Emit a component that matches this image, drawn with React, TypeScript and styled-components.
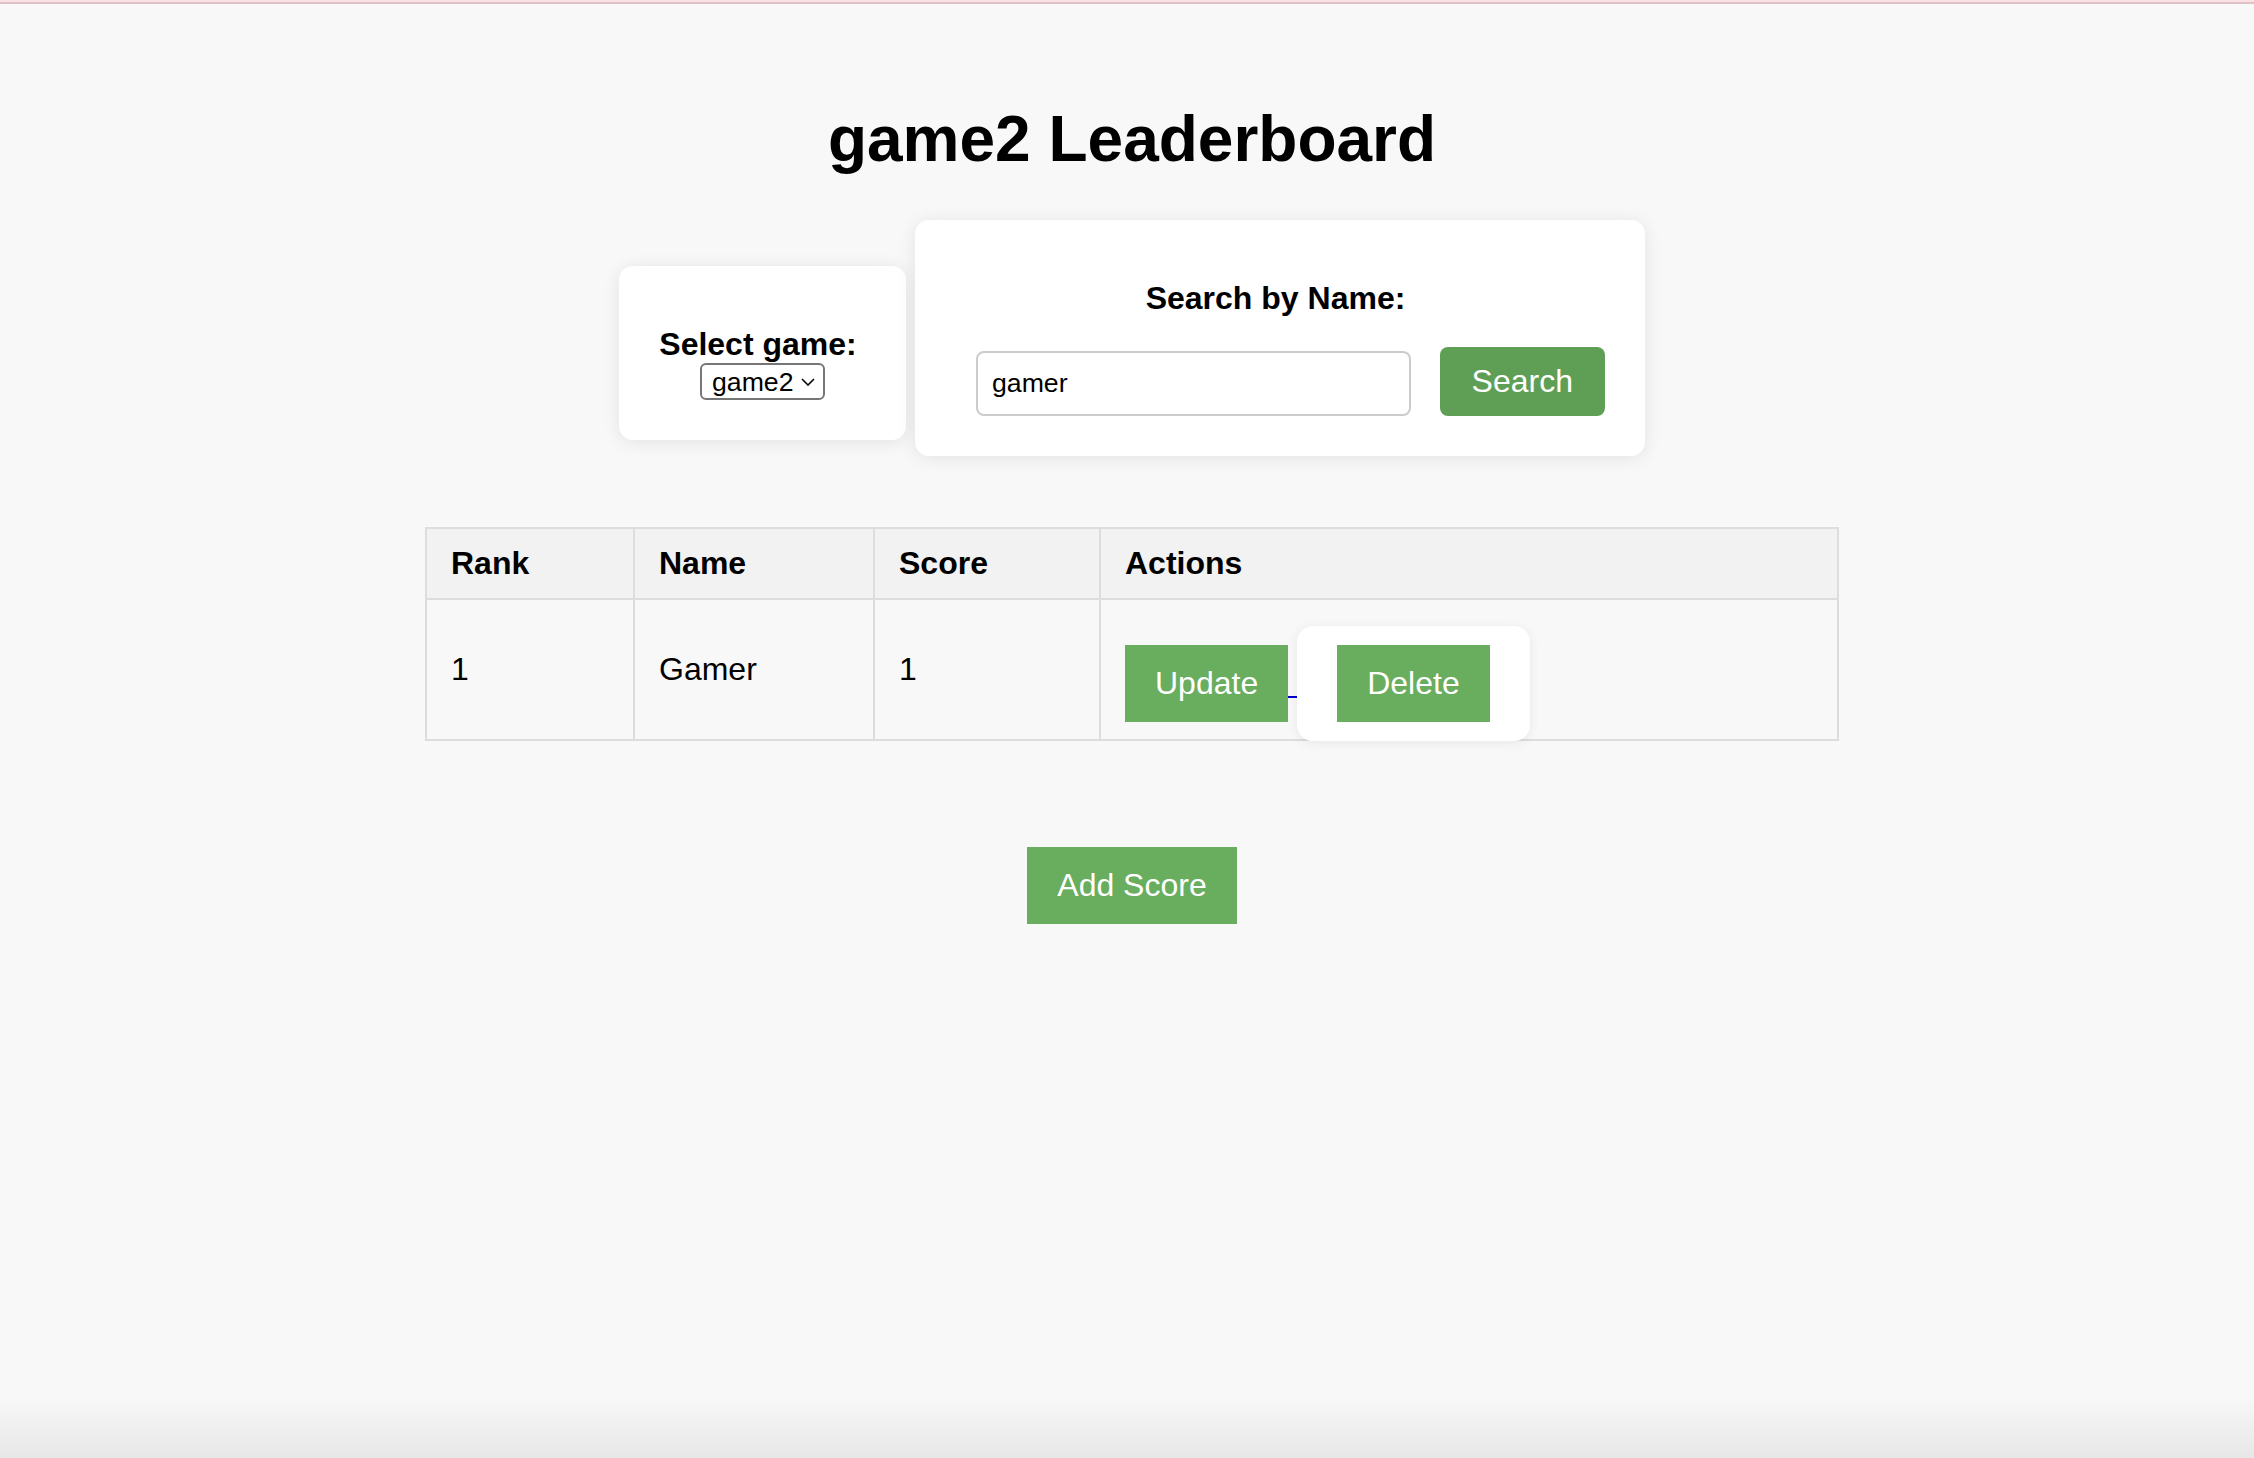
import React from "react";
import styled, { createGlobalStyle } from "styled-components";

const GlobalStyle = createGlobalStyle`
  html, body { margin: 0; padding: 0; }
  body {
    font-family: "Liberation Sans", Arial, Helvetica, sans-serif;
    color: #000;
    background: #f8f8f8;
  }
`;

const Screen = styled.div`
  min-height: 100vh;
  box-sizing: border-box;
  background: linear-gradient(to bottom, #f8f8f8 0, #f8f8f8 calc(100% - 62px), #e7e7e7 100%);
  display: flex;
  flex-direction: column;
`;

const TopStripe = styled.div`
  height: 2px;
  background: #fbdfe5;
  border-bottom: 2px solid #dcc3c8;
`;

const Main = styled.main`
  padding: 98px 16px 0 26px;
  display: flex;
  flex-direction: column;
  align-items: center;
`;

const Title = styled.h1`
  margin: 0 0 44px;
  font-size: 64px;
  font-weight: bold;
  line-height: normal;
  text-align: center;
`;

const ControlsRow = styled.div`
  display: flex;
  justify-content: center;
  align-items: flex-start;
  gap: 9px;
  margin-bottom: 71px;
`;

const Card = styled.div<{ $offset?: number }>`
  background: #fff;
  border-radius: 14px;
  box-shadow: 0 2px 18px rgba(0, 0, 0, 0.09);
  box-sizing: border-box;
  text-align: center;
  margin-top: ${(p) => p.$offset ?? 0}px;
`;

const SelectCard = styled(Card)`
  width: 287px;
  padding: 60px 30px 40px;
`;

const SearchCard = styled(Card)`
  width: 730px;
  padding: 60px 40px 40px;
`;

const Label = styled.label<{ $gap?: number }>`
  display: block;
  font-size: 32px;
  font-weight: bold;
  line-height: normal;
  white-space: nowrap;
  padding-right: 9px;
  margin-bottom: ${(p) => p.$gap ?? 0}px;
`;

const SelectWrap = styled.span`
  position: relative;
  display: inline-block;
  height: 37px;
  vertical-align: top;
`;

const GameSelect = styled.select`
  appearance: none;
  -webkit-appearance: none;
  width: 125px;
  height: 37px;
  box-sizing: border-box;
  margin: 0;
  padding: 0 0 0 10px;
  border: 2px solid #767676;
  border-radius: 6px;
  background: #fff;
  font-family: "Liberation Sans", Arial, Helvetica, sans-serif;
  font-size: 26.67px;
  color: #000;
  text-align: left;
`;

const Chevron = styled.svg`
  position: absolute;
  right: 10px;
  top: 15px;
  pointer-events: none;
`;

const SearchRow = styled.div`
  display: flex;
  align-items: flex-end;
`;

const SearchInput = styled.input`
  width: 435px;
  height: 65px;
  box-sizing: border-box;
  margin: 0 29px 0 21px;
  padding: 0 14px;
  border: 2px solid #cccccc;
  border-radius: 8px;
  background: #fff;
  font-family: "Liberation Sans", Arial, Helvetica, sans-serif;
  font-size: 26.67px;
  color: #000;
  outline: none;
`;

const GreenButton = styled.button<{ $variant?: "search" | "plain" }>`
  border: none;
  margin: 0;
  cursor: pointer;
  font-family: "Liberation Sans", Arial, Helvetica, sans-serif;
  font-size: 32px;
  line-height: normal;
  color: #fff;
  background: ${(p) => (p.$variant === "search" ? "#5f9f55" : "#69ad5e")};
  border-radius: ${(p) => (p.$variant === "search" ? "8px" : "0")};
  padding: ${(p) => (p.$variant === "search" ? "16px 32px" : "20px 30px")};
  white-space: nowrap;
`;

const Board = styled.table`
  width: 1412px;
  table-layout: fixed;
  border-collapse: collapse;
  margin-bottom: 106px;
  font-size: 32px;
`;

const HeadCell = styled.th`
  background: #f2f2f2;
  border: 2px solid #dddddd;
  padding: 16px 24px;
  text-align: left;
  font-weight: bold;
  line-height: normal;
`;

const Cell = styled.td`
  border: 2px solid #dddddd;
  padding: 16px 24px;
  text-align: left;
  vertical-align: middle;
  line-height: normal;
`;

const Actions = styled.div`
  display: flex;
  align-items: flex-start;
  height: 107px;
`;

const UpdateLink = styled.a`
  display: flex;
  align-items: flex-start;
  margin-top: 29px;
  text-decoration: none;
`;

const LinkGap = styled.span`
  width: 9px;
  height: 2px;
  margin-top: 51px;
  background: #0000cc;
`;

const DeleteForm = styled.form`
  margin: 10px 0 0;
  padding: 19px 40px;
  background: #fff;
  border-radius: 16px;
  box-shadow: 0 2px 12px rgba(0, 0, 0, 0.07);
  display: flex;
`;

const Footer = styled.div`
  display: flex;
  justify-content: center;
`;

const columns = [
  { key: "rank", label: "Rank", width: 208 },
  { key: "name", label: "Name", width: 240 },
  { key: "score", label: "Score", width: 226 },
  { key: "actions", label: "Actions", width: 738 },
];

const rows = [{ rank: 1, name: "Gamer", score: 1 }];

export default function App() {
  return (
    <>
      <GlobalStyle />
      <Screen>
        <TopStripe />
        <Main>
          <Title>game2 Leaderboard</Title>
          <ControlsRow>
            <SelectCard $offset={46}>
              <Label htmlFor="game">Select game:</Label>
              <SelectWrap>
                <GameSelect id="game" defaultValue="game2">
                  <option value="game1">game1</option>
                  <option value="game2">game2</option>
                </GameSelect>
                <Chevron width="14" height="8" viewBox="0 0 14 8" fill="none">
                  <path d="M1 1 L7 7 L13 1" stroke="#000" strokeWidth="1.6" />
                </Chevron>
              </SelectWrap>
            </SelectCard>
            <SearchCard>
              <Label htmlFor="search" $gap={30}>
                Search by Name:
              </Label>
              <SearchRow>
                <SearchInput id="search" defaultValue="gamer" />
                <GreenButton $variant="search">Search</GreenButton>
              </SearchRow>
            </SearchCard>
          </ControlsRow>

          <Board>
            <colgroup>
              {columns.map((c) => (
                <col key={c.key} style={{ width: c.width }} />
              ))}
            </colgroup>
            <thead>
              <tr>
                {columns.map((c) => (
                  <HeadCell key={c.key}>{c.label}</HeadCell>
                ))}
              </tr>
            </thead>
            <tbody>
              {rows.map((r) => (
                <tr key={r.rank}>
                  <Cell>{r.rank}</Cell>
                  <Cell>{r.name}</Cell>
                  <Cell>{r.score}</Cell>
                  <Cell>
                    <Actions>
                      <UpdateLink href="#">
                        <GreenButton as="span">Update</GreenButton>
                        <LinkGap />
                      </UpdateLink>
                      <DeleteForm onSubmit={(e) => e.preventDefault()}>
                        <GreenButton type="submit">Delete</GreenButton>
                      </DeleteForm>
                    </Actions>
                  </Cell>
                </tr>
              ))}
            </tbody>
          </Board>

          <Footer>
            <GreenButton>Add Score</GreenButton>
          </Footer>
        </Main>
      </Screen>
    </>
  );
}
